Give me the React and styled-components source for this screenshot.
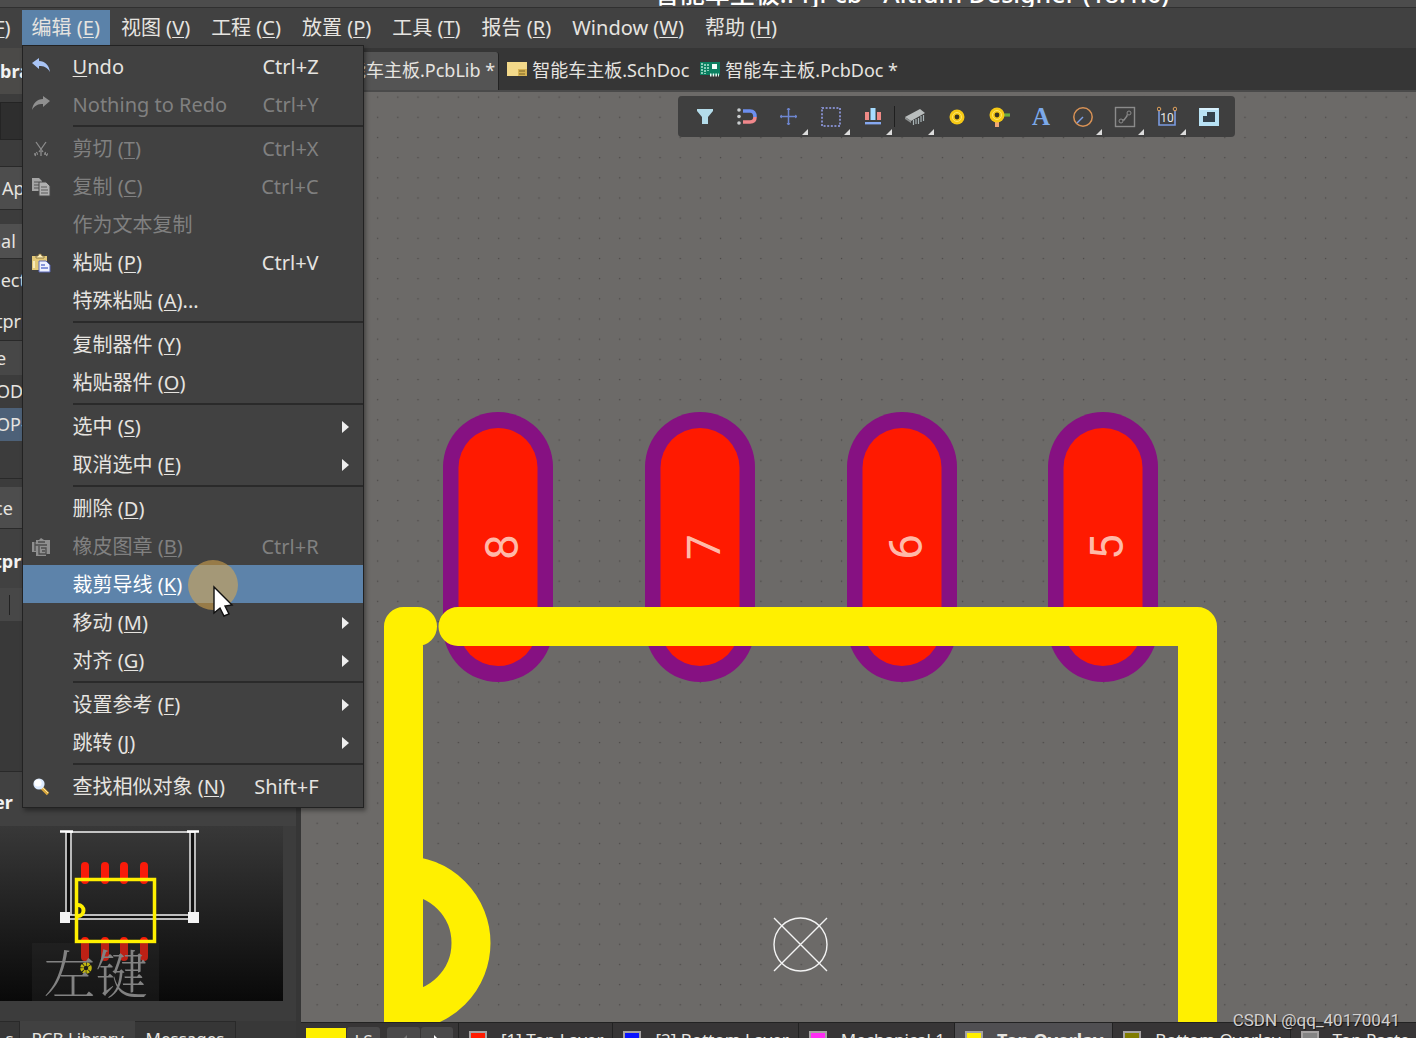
import React from 'react'
import styled, { createGlobalStyle, css } from 'styled-components';

const GlobalStyle = createGlobalStyle`
    *{
        box-sizing: border-box;
        margin: 0;
        padding: 0;
    }
    body{
        background: #3a3a3a;
        font-family: 'Noto Sans', 'Noto Sans CJK SC', sans-serif;
        color: #e6e4e0;
        overflow: hidden;
    }
    button, input, select{
        font: inherit;
        color: inherit;
        border: none;
        background: none;
        appearance: none;
    }
`;

const menuBar = ['文件 (&F)', '编辑 (&E)', '视图 (&V)', '工程 (&C)', '放置 (&P)', '工具 (&T)', '报告 (&R)', 'Window (&W)', '帮助 (&H)'];

const editMenu = [
    [
        { label: '&Undo', keys: 'Ctrl+Z', icon: 'undo' },
        { label: 'Nothing to Redo', keys: 'Ctrl+Y', icon: 'redo', disabled: true },
    ],
    [
        { label: '剪切 (&T)', keys: 'Ctrl+X', icon: 'cut', disabled: true },
        { label: '复制 (&C)', keys: 'Ctrl+C', icon: 'copy', disabled: true },
        { label: '作为文本复制', disabled: true },
        { label: '粘贴 (&P)', keys: 'Ctrl+V', icon: 'paste' },
        { label: '特殊粘贴 (&A)...' },
    ],
    [
        { label: '复制器件 (&Y)' },
        { label: '粘贴器件 (&O)' },
    ],
    [
        { label: '选中 (&S)', sub: true },
        { label: '取消选中 (&E)', sub: true },
    ],
    [
        { label: '删除 (&D)' },
        { label: '橡皮图章 (&B)', keys: 'Ctrl+R', icon: 'stamp', disabled: true },
        { label: '裁剪导线 (&K)', active: true },
        { label: '移动 (&M)', sub: true },
        { label: '对齐 (&G)', sub: true },
    ],
    [
        { label: '设置参考 (&F)', sub: true },
        { label: '跳转 (&J)', sub: true },
    ],
    [
        { label: '查找相似对象 (&N)', keys: 'Shift+F', icon: 'find' },
    ],
];

const tools = [
    { name: 'filter' },
    { name: 'snap' },
    { name: 'move', more: true },
    { name: 'select', more: true },
    { name: 'align', more: true },
    { name: 'component', more: true, divider: true },
    { name: 'pad' },
    { name: 'via' },
    { name: 'string' },
    { name: 'arc', more: true },
    { name: 'line', more: true },
    { name: 'dimension', more: true },
    { name: 'region' },
];

const layers = [
    { name: '[1] Top Layer', color: '#ff1a00' },
    { name: '[2] Bottom Layer', color: '#0a14ff' },
    { name: 'Mechanical 1', color: '#ff2cf4' },
    { name: 'Top Overlay', color: '#fff000', active: true },
    { name: 'Bottom Overlay', color: '#807c00' },
    { name: 'Top Paste', color: '#838383' },
];

const pads = [
    { x: 498, n: '8' },
    { x: 700, n: '7' },
    { x: 902, n: '6' },
    { x: 1103, n: '5' },
];

const menuIcons = {
    undo: (
        <path d="M1 6 L8 1 V4 C14 4 18 8 19 15 C16 10 13 9 8 9 V12 Z" fill="#a9c4f5" />
    ),
    redo: (
        <path d="M19 6 L12 1 V4 C6 4 2 8 1 15 C4 10 7 9 12 9 V12 Z" fill="#8f8f8f" />
    ),
    cut: (
        <g stroke="#8c8c8c" strokeWidth="1.3" fill="none">
            <path d="M5 3 L12 13 M15 3 L8 13 M10 12 V17" />
            <path d="M4 17 L6 13 M16 17 L14 13 M3 15 H7 M13 15 H17" strokeDasharray="2 1" />
        </g>
    ),
    copy: (
        <g>
            <path d="M1 1 H8 L11 4 V14 H1 Z" fill="#a5a5a5" />
            <path d="M3 5 H8 M3 8 H8 M3 11 H8" stroke="#555" strokeWidth="1.2" />
            <path d="M8 5 H15 L19 9 V19 H8 Z" fill="#b0b0b0" stroke="#4a4a4a" />
            <path d="M10 10 H16 M10 13 H17 M10 16 H17" stroke="#5a5a5a" strokeWidth="1.2" />
        </g>
    ),
    paste: (
        <g>
            <path d="M1 3 H16 V17 H1 Z" fill="#e3c878" />
            <path d="M5 5 V3 H7 L8 1 H10 L11 3 H13 V5 Z" fill="#fff0b8" stroke="#7d6a38" strokeWidth="0.8" />
            <path d="M3 8 V15" stroke="#fff4cf" strokeWidth="1.5" />
            <path d="M8 8 H15 L19 12 V19 H8 Z" fill="#eef2ff" stroke="#5a68b8" />
            <path d="M10 12 H14 M10 15 H17" stroke="#6478d0" strokeWidth="1.4" />
        </g>
    ),
    stamp: (
        <g>
            <path d="M1 5 H5 V3 H8 L10 1 L13 3 H19 V17 H15 V19 H5 V15 H1 Z" fill="#8f8f8f" />
            <path d="M4 8 H16 M4 5 V14 M8 9 V17 H15 V11 H10 M11 14 H14 M7 5 H14" stroke="#4d4d4d" strokeWidth="1.3" fill="none" />
        </g>
    ),
    find: (
        <g>
            <path d="M11 11 L17 17" stroke="#d9a83e" strokeWidth="3.4" />
            <path d="M12 11 L17 16" stroke="#ffe39a" strokeWidth="1" />
            <circle cx="8" cy="7" r="5.6" fill="#dcebff" />
            <circle cx="7" cy="6" r="3.6" fill="#fff" />
        </g>
    ),
};

const toolIcons = {
    filter: <path d="M2 2 H18 V4 L13 10 V17 H7 V10 L2 4 Z" fill="#b4dcea" />,
    snap: (
        <g fill="none" strokeWidth="3.6">
            <path d="M6 4 H13 C17 4 18 7 18 10" stroke="#6c8ff0" />
            <path d="M6 15 H13 C17 15 18 13 18 10" stroke="#f0878b" />
            <g fill="#c9cdcf" stroke="none">
                <circle cx="2" cy="3" r="1.8" />
                <circle cx="2" cy="9.5" r="1.8" />
                <circle cx="2" cy="16" r="1.8" />
            </g>
        </g>
    ),
    move: (
        <g stroke="#6e86d0" fill="none">
            <path d="M9.500 1 V18 M1 9.500 H18" strokeWidth="1.5" />
            <path d="M8 3 L9.500 1 L11 3 M8 16 L9.500 18 L11 16 M3 8 L1 9.500 L3 11 M16 8 L18 9.500 L16 11" />
        </g>
    ),
    select: <rect x="1" y="1" width="18" height="18" fill="none" stroke="#98a4f2" strokeWidth="1.5" strokeDasharray="2 1.6" />,
    align: (
        <g>
            <rect x="2" y="5" width="4" height="8" fill="#ef8a86" />
            <rect x="7.5" y="1" width="5" height="12" fill="#a6dcff" />
            <rect x="14" y="5" width="4" height="8" fill="#ef8a86" />
            <rect x="2" y="15" width="16" height="2.4" fill="#86a8f0" />
        </g>
    ),
    component: (
        <g>
            <path d="M0 10 L15 2 L20 6 L6 14 Z" fill="#b9bdbd" />
            <path d="M0 10 L6 14 V16 L0 12 Z" fill="#8c9090" />
            <path d="M8.500 13 V18 M11 12 V17 M13.500 11 V17 M16 9 V15 M18.500 8 V14" stroke="#a8b4b6" strokeWidth="1.2" />
        </g>
    ),
    pad: (
        <g>
            <circle cx="10" cy="10" r="7.5" fill="#f6c915" />
            <circle cx="10" cy="10" r="4.5" fill="none" stroke="#ffe66a" />
            <circle cx="10" cy="10" r="2.4" fill="#3a3420" />
        </g>
    ),
    via: (
        <g>
            <path d="M8 11 V20" stroke="#f0a675" strokeWidth="4" />
            <path d="M12 8 H21" stroke="#6aab3e" strokeWidth="3.2" />
            <circle cx="8" cy="8" r="7.5" fill="#f6c915" />
            <circle cx="8" cy="8" r="4.5" fill="none" stroke="#ffe66a" />
            <circle cx="8" cy="8" r="2.4" fill="#3a3420" />
        </g>
    ),
    arc: (
        <g fill="none">
            <circle cx="10" cy="10" r="9.2" stroke="#d99255" strokeWidth="1.5" />
            <path d="M4 16 L10 10" stroke="#7ea0e6" strokeWidth="1.5" />
        </g>
    ),
    line: (
        <g fill="none" stroke="#8b8b8b">
            <rect x="0.5" y="0.5" width="19" height="19" strokeWidth="1.4" />
            <circle cx="6" cy="14" r="2" />
            <circle cx="14" cy="6" r="2" />
            <path d="M7.500 13 H9 L12 9 V7.500" strokeWidth="1.4" />
        </g>
    ),
    region: (
        <g>
            <rect x="0" y="1" width="20" height="18" fill="#b8e2f5" />
            <path d="M8 5 H16 V15 H4 V9 H8 Z" fill="#34424c" />
            <path d="M1 2 H19" stroke="#e4f6ff" strokeWidth="1.5" />
        </g>
    ),
};

function Label({ text }) {
    const i = text.indexOf('&');
    if (i < 0) return <span>{text}</span>
    return (
        <span>{text.slice(0, i)}<Accel>{text[i + 1]}</Accel>{text.slice(i + 2)}</span>
    )
}

function ToolIcon({ name }) {
    if (name === 'string') return <Letter>A</Letter>
    if (name === 'dimension') return (
        <svg width="20" height="22" viewBox="0 0 20 22" fill="none">
            <path d="M2 4 V19 H18 V4" stroke="#7b9be0" strokeWidth="1.6" />
            <circle cx="2" cy="3" r="1.8" stroke="#e0a15c" />
            <circle cx="18" cy="3" r="1.8" stroke="#e0a15c" />
            <text x="10" y="16" fontSize="12" textAnchor="middle" fill="#e6e6e6" fontFamily="Roboto, sans-serif">10</text>
        </svg>
    )
    return <svg width="20" height="20" viewBox="0 0 20 20" overflow="visible">{toolIcons[name]}</svg>
}

function EditMenu() {
    return (
        <MenuPopup role="menu">
            {editMenu.map((group, i) => (
                <MenuGroup key={i}>
                    {group.map((item) => {
                        const { label, keys, icon, disabled, active, sub } = item;
                        return <MenuItem key={label} role="menuitem" disabled={disabled} $active={active}>
                            <IconCell>
                                {icon && <svg width="20" height="20" viewBox="0 0 20 20">{menuIcons[icon]}</svg>}
                            </IconCell>
                            <Label text={label} />
                            {keys && <Keys>{keys}</Keys>}
                            {sub && <SubArrow />}
                            {active && <Pointer />}
                        </MenuItem>
                    })}
                </MenuGroup>
            ))}
        </MenuPopup>
    )
}

function Pointer() {
    return (
        <PointerSvg width="50" height="60" viewBox="0 0 50 60">
            <circle cx="25" cy="25" r="25" fill="#dca94f" fillOpacity="0.56" />
            <path d="M26 27 V53 L32 48 L36 56 L41 54 L37 46 L44 45 Z" fill="#fff" stroke="#111" strokeWidth="1.4" />
        </PointerSvg>
    )
}

function LibraryPanel() {
    return (
        <Dock>
            <PanelTitle $h={46}>brary</PanelTitle>
            <MaskRow>
                <MaskInput aria-label="Mask" />
            </MaskRow>
            <PanelButton $h={43} $wide>Apply</PanelButton>
            <Spacer $h={14} />
            <PanelSelect aria-label="Mode">
                <option>nal</option>
            </PanelSelect>
            <PanelRow $h={42}>lect</PanelRow>
            <PanelRow $h={40} $line>tprints</PanelRow>
            <PanelRow $h={34} $bg="#474747">e</PanelRow>
            <PanelRow $h={33}>OD</PanelRow>
            <PanelRow $h={33} $bg="#4d6178">OP-8</PanelRow>
            <Spacer $h={38} $line />
            <Spacer $h={8} />
            <PanelButton $h={42}>ce</PanelButton>
            <PanelTitle $h={59} $plain>tprint</PanelTitle>
            <ColumnRow><ColumnMark /></ColumnRow>
            <Spacer $h={151} $line $bg="#393939" />
            <PanelTitle $h={54} $plain>er</PanelTitle>
            <Preview />
            <DockTabs>
                <DockTab $w={20}>s</DockTab>
                <DockTab $w={115} $active>PCB Library</DockTab>
                <DockTab $w={101}>Messages</DockTab>
            </DockTabs>
        </Dock>
    )
}

function Preview() {
    return (
        <PreviewBox>
            <svg width="283" height="175" viewBox="0 826 283 175">
                {[85, 105, 124, 144].map((x) => (
                    <path key={x} d={`M${x} 866 V880 M${x} 941 V957`} stroke="#f81b0a" strokeWidth="8" strokeLinecap="round" />
                ))}
                <path d="M68.500 832 V915 M192.500 832 V915 M66 917 H195" stroke="#111" strokeWidth="3" />
                <path d="M66 832 H195 M66 832 V917 M71 832 V915 M190 832 V915 M195 832 V917 M66 915 H195 M66 919 H195" stroke="#f2f2f2" strokeWidth="1.4" />
                <path d="M60 831.500 H73 M187 831.500 H199" stroke="#fff" strokeWidth="2.5" />
                <path d="M60 912 H70 V923 H60 Z M188 912 H199 V923 H188 Z" fill="#f4f4f4" />
                <rect x="76.5" y="879.5" width="78" height="62" fill="none" stroke="#fff000" strokeWidth="3.5" />
                <path d="M78 905 A5 5 0 0 1 78 916" fill="none" stroke="#fff000" strokeWidth="4" />
                <circle cx="86" cy="968" r="4" fill="none" stroke="#fff000" strokeWidth="3.6" strokeDasharray="2.5 0.7" />
            </svg>
            <KeyHint>左键</KeyHint>
        </PreviewBox>
    )
}

function Board() {
    return (
        <Drawing>
            <defs>
                <pattern id="grid" x="6" y="-5" width="20.17" height="20.17" patternUnits="userSpaceOnUse">
                    <rect x="9.5" y="9.5" width="1.3" height="1.3" fill="#4b4947" />
                </pattern>
            </defs>
            <rect width="100%" height="100%" fill="url(#grid)" />
            <g transform="translate(-301 -92)">
                {pads.map(({ x, n }) => (
                    <g key={n}>
                        <rect x={x - 55} y="412" width="110" height="270" rx="55" fill="#861182" />
                        <rect x={x - 39.5} y="428" width="79" height="238" rx="39.5" fill="#ff1a00" />
                        <PadName transform={`translate(${x + 20} 547) rotate(-90)`}>{n}</PadName>
                    </g>
                ))}
                <g fill="none" stroke="#fff000" strokeWidth="39" strokeLinecap="round" strokeLinejoin="round">
                    <path d="M417.500 626.500 H403.500 V1100" />
                    <path d="M458 626.500 H1197.500 V1100" />
                    <path d="M403.500 875.500 A67.500 67.500 0 0 1 403.500 1010.500" />
                </g>
                <g fill="none" stroke="#f4f4f4" strokeWidth="1.4">
                    <circle cx="800.5" cy="944.5" r="26.5" />
                    <path d="M774 918 L827 971 M827 918 L774 971" />
                </g>
            </g>
        </Drawing>
    )
}

function App() {
    return (
        <Shell>
            <GlobalStyle />
            <TitleBar>智能车主板.PrjPcb - Altium Designer (18.1.6)</TitleBar>
            <MenuBar>
                {menuBar.map((text) => {
                    const open = text.startsWith('编辑');
                    return <MenuHead key={text}>
                        <MenuButton $open={open}><Label text={text} /></MenuButton>
                        {open && <EditMenu />}
                    </MenuHead>
                })}
            </MenuBar>
            <Workspace>
                <LibraryPanel />
                <Editor>
                    <DocTabs>
                        <DocTab $active>
                            <svg width="16" height="18" viewBox="0 0 16 18"><path d="M0 2 H16 V16 H0 Z" fill="#0c7a5c" /></svg>
                            智能车主板.PcbLib *
                        </DocTab>
                        <DocTab>
                            <svg width="20" height="18" viewBox="0 0 20 18">
                                <rect y="2" width="20" height="14" fill="#f3d98a" />
                                <path d="M11 9 H20 V16 H11 Z" fill="#d8b454" />
                                <path d="M12 11 H18 M12 14 H18" stroke="#7a6428" strokeWidth="1.2" />
                            </svg>
                            智能车主板.SchDoc
                        </DocTab>
                        <DocTab>
                            <svg width="20" height="18" viewBox="0 0 20 18">
                                <rect y="2" width="20" height="13" fill="#0b7f60" />
                                <path d="M2 3 V15 M5 4 V14 M8 4 V11" stroke="#b5e8d4" strokeWidth="1.5" strokeDasharray="2 1" />
                                <rect x="12" y="4" width="5" height="5" fill="#f2fffa" />
                                <path d="M10 15 H19" stroke="#e6fff6" strokeWidth="3" strokeDasharray="1.5 1.2" />
                            </svg>
                            智能车主板.PcbDoc *
                        </DocTab>
                    </DocTabs>
                    <Canvas>
                        <Board />
                        <Toolbar>
                            {tools.map(({ name, more, divider }) => (
                                <Tool key={name} aria-label={name} $more={more} $divider={divider}>
                                    <ToolIcon name={name} />
                                </Tool>
                            ))}
                        </Toolbar>
                        <Watermark>CSDN @qq_40170041</Watermark>
                    </Canvas>
                    <LayerBar>
                        <CurrentLayer />
                        <LayerButton $w={33}>LS</LayerButton>
                        <NavButtons>
                            <LayerButton $w={33} aria-label="previous">
                                <svg width="8" height="12" viewBox="0 0 8 12"><path d="M7 0 V12 L1 6 Z" fill="#777" /></svg>
                            </LayerButton>
                            <LayerButton $w={32} aria-label="next">
                                <svg width="8" height="12" viewBox="0 0 8 12"><path d="M1 0 V12 L7 6 Z" fill="#fff" /></svg>
                            </LayerButton>
                        </NavButtons>
                        {layers.map(({ name, color, active }) => (
                            <LayerTab key={name} $active={active}>
                                <Swatch $color={color} />
                                {name}
                            </LayerTab>
                        ))}
                    </LayerBar>
                </Editor>
            </Workspace>
        </Shell>
    )
}

const Shell = styled.div`
    display: flex;
    flex-direction: column;
    height: 100vh;
    overflow: hidden;
`;

const TitleBar = styled.div`
    display: flex;
    align-items: flex-end;
    justify-content: center;
    height: 8px;
    padding: 0 0 2px 408px;
    background: #4c4c4c;
    border-bottom: 1px solid #303030;
    overflow: hidden;
    font-size: 25px;
    font-weight: 500;
    line-height: 24px;
    color: #fff;
    white-space: nowrap;
`;

const MenuBar = styled.nav`
    display: flex;
    flex: none;
    height: 40px;
    padding-top: 2px;
    margin-left: -67px;
    background: #414141;
`;

const MenuHead = styled.div`
    position: relative;
    margin-right: 1px;
`;

const MenuButton = styled.button`
    height: 35px;
    padding: 1px 10px 0;
    font-size: 20px;
    line-height: 34px;
    white-space: nowrap;
    background: ${(p) => (p.$open ? '#5b82a9' : 'transparent')};
`;

const Accel = styled.u`
    text-decoration-thickness: 1px;
    text-underline-offset: 2px;
`;

const MenuPopup = styled.div`
    position: absolute;
    z-index: 10;
    top: 35px;
    left: 0;
    width: 342px;
    padding: 1px 0 2px;
    background: #414141;
    border: 1px solid #222;
    box-shadow: 2px 3px 4px rgba(0,0,0,0.35);
`;

const MenuGroup = styled.div`
    & + &{
        padding-top: 6px;
        background: linear-gradient(#2a2a2a, #2a2a2a) 50px 2px / 100% 2px no-repeat;
    }
`;

const MenuItem = styled.button`
    position: relative;
    display: flex;
    align-items: center;
    width: 100%;
    height: 38px;
    padding: 1px 14px 0 0;
    font-size: 20px;
    line-height: 36px;
    text-align: left;
    white-space: nowrap;
    color: ${(p) => (p.disabled ? '#808080' : '#e6e4e0')};
    ${(p) => p.$active && css`
        background: #5d83aa;
        color: #fff;
    `}
`;

const IconCell = styled.span`
    display: flex;
    flex: none;
    width: 50px;
    padding-left: 8px;
`;

const Keys = styled.span`
    margin-left: auto;
    padding-right: 30px;
`;

const SubArrow = styled.span`
    margin-left: auto;
    border: 6px solid transparent;
    border-left: 7px solid #eee;
    border-right: none;
`;

const PointerSvg = styled.svg`
    position: absolute;
    z-index: 2;
    top: -5px;
    left: 165px;
`;

const Workspace = styled.div`
    display: flex;
    flex: 1;
    min-height: 0;
`;

const Dock = styled.aside`
    display: flex;
    flex-direction: column;
    flex: none;
    width: 301px;
    overflow: hidden;
    background: #3c3c3c;
    border-right: 5px solid #363636;
    font-size: 18px;
    white-space: nowrap;
`;

const PanelTitle = styled.h2`
    flex: none;
    height: ${(p) => p.$h}px;
    padding-top: ${(p) => (p.$plain ? 3 : 0)}px;
    line-height: ${(p) => p.$h}px;
    background: ${(p) => (p.$plain ? '#414141' : '#4b4a48')};
    font-size: 18px;
    font-weight: 700;
    text-indent: ${(p) => (p.$plain ? -6 : 0)}px;
    color: #f2f2f2;
`;

const PanelRow = styled.div`
    flex: none;
    height: ${(p) => p.$h}px;
    line-height: ${(p) => p.$h}px;
    text-indent: -4px;
    background: ${(p) => p.$bg || 'transparent'};
    border-bottom: ${(p) => (p.$line ? '1px solid #292929' : 'none')};
`;

const Spacer = styled.div`
    flex: none;
    height: ${(p) => p.$h}px;
    background: ${(p) => p.$bg || 'transparent'};
    border-bottom: ${(p) => (p.$line ? '1px solid #292929' : 'none')};
`;

const MaskRow = styled.div`
    flex: none;
    height: 73px;
    padding: 8px 10px 26px 0;
    border-bottom: 1px solid #292929;
`;

const MaskInput = styled.input`
    width: 100%;
    height: 38px;
    background: #2e2e2e;
    border: 1px solid #242424;
`;

const PanelButton = styled.button`
    flex: none;
    height: ${(p) => p.$h}px;
    margin-right: 10px;
    padding-left: ${(p) => (p.$wide ? 2 : 0)}px;
    text-indent: ${(p) => (p.$wide ? 0 : -6)}px;
    background: #4d4d4d;
    border-bottom: 1px solid #2a2a2a;
    text-align: left;
`;

const PanelSelect = styled.select`
    flex: none;
    height: 35px;
    margin-right: 10px;
    background: #505050;
    border-bottom: 1px solid #2a2a2a;
    text-indent: -10px;
`;

const ColumnRow = styled.div`
    display: flex;
    flex: none;
    align-items: center;
    height: 33px;
    padding-left: 9px;
    background: #474747;
`;

const ColumnMark = styled.span`
    width: 1px;
    height: 20px;
    background: #222;
`;

const PreviewBox = styled.div`
    position: relative;
    flex: none;
    width: 283px;
    height: 175px;
    background: linear-gradient(#383838, #090909);
    svg{
        display: block;
    }
`;

const KeyHint = styled.div`
    position: absolute;
    left: 32px;
    bottom: 0;
    width: 127px;
    height: 58px;
    background: rgba(50,50,50,0.3);
    font-family: 'Liberation Serif', 'Noto Serif CJK SC', 'Noto Sans CJK SC', serif;
    font-size: 52px;
    font-weight: 300;
    line-height: 68px;
    text-align: center;
    color: #828282;
`;

const DockTabs = styled.div`
    display: flex;
    margin-top: auto;
    height: 17px;
    overflow: hidden;
    background: #383838;
`;

const DockTab = styled.button`
    flex: none;
    width: ${(p) => p.$w}px;
    height: 35px;
    border: 1px solid #292929;
    border-width: ${(p) => (p.$active ? '0' : '1px 1px 0 0')};
    background: ${(p) => (p.$active ? '#414141' : '#363636')};
    font-size: 17px;
    line-height: 34px;
`;

const Editor = styled.main`
    display: flex;
    flex-direction: column;
    flex: 1;
    min-width: 0;
`;

const DocTabs = styled.div`
    display: flex;
    flex: none;
    height: 44px;
    padding-top: 4px;
    background: #363636;
    border-bottom: 2px solid #4a4a4a;
`;

const DocTab = styled.button`
    display: flex;
    align-items: center;
    gap: 5px;
    padding: 0 3px 4px 8px;
    font-size: 18px;
    white-space: nowrap;
    border-radius: 3px 3px 0 0;
    background: ${(p) => (p.$active ? '#545454' : 'transparent')};
    border-right: ${(p) => (p.$active ? '1px solid #222' : 'none')};
`;

const Canvas = styled.div`
    position: relative;
    flex: 1;
    min-height: 0;
    background: #6c6a68;
`;

const Drawing = styled.svg`
    display: block;
    width: 100%;
    height: 100%;
`;

const PadName = styled.text`
    fill: #ffb9a8;
    font-family: Roboto, 'Open Sans', sans-serif;
    font-size: 46px;
    font-weight: 400;
    text-anchor: middle;
`;

const Toolbar = styled.div`
    position: absolute;
    top: 4px;
    left: 377px;
    display: flex;
    height: 41px;
    padding: 0 5px 0 6px;
    background: #3f3f3f;
    border-radius: 4px;
`;

const Tool = styled.button`
    position: relative;
    display: flex;
    align-items: center;
    justify-content: center;
    width: 42px;
    ${(p) => p.$more && css`
        &::after{
            content: '';
            position: absolute;
            right: 2px;
            bottom: 2px;
            border-left: 6px solid transparent;
            border-bottom: 6px solid #dcdcdc;
        }
    `}
    ${(p) => p.$divider && css`
        &::before{
            content: '';
            position: absolute;
            left: 0;
            top: 10px;
            bottom: 10px;
            width: 1px;
            background: #1f1f1f;
        }
    `}
`;

const Letter = styled.span`
    font-family: 'Liberation Serif', serif;
    font-size: 25px;
    font-weight: 700;
    color: #7ba9ea;
`;

const Watermark = styled.div`
    position: absolute;
    z-index: 3;
    right: 16px;
    bottom: -8px;
    font-family: Roboto, sans-serif;
    font-size: 17px;
    line-height: 20px;
    color: #d2d0d0;
    text-shadow: 1px 1px 1px rgba(0,0,0,0.6);
`;

const LayerBar = styled.div`
    display: flex;
    flex: none;
    height: 16px;
    padding-left: 5px;
    overflow: hidden;
    background: #373536;
    border-top: 1px solid #222;
`;

const CurrentLayer = styled.span`
    flex: none;
    width: 40px;
    height: 26px;
    margin-top: 5px;
    margin-right: 1px;
    background: #fff000;
`;

const LayerButton = styled.button`
    flex: none;
    width: ${(p) => p.$w}px;
    height: 28px;
    margin-top: 4px;
    background: #4a494a;
    border-radius: 3px;
    font-size: 17px;
    line-height: 24px;
`;

const NavButtons = styled.div`
    display: flex;
    flex: none;
    gap: 1px;
    margin: 0 5px 0 7px;
`;

const LayerTab = styled.button`
    display: flex;
    flex: none;
    align-items: center;
    gap: 14px;
    height: 34px;
    padding: 0 9px 0 10px;
    border-left: 1px solid #222;
    background: ${(p) => (p.$active ? '#504f52' : 'transparent')};
    font-size: ${(p) => (p.$active ? 18 : 17)}px;
    font-weight: ${(p) => (p.$active ? 700 : 400)};
    line-height: 34px;
    white-space: nowrap;
`;

const Swatch = styled.span`
    width: 18px;
    height: 18px;
    background: ${(p) => p.$color};
    border: 2px solid #a5a2a2;
`;

export default App
